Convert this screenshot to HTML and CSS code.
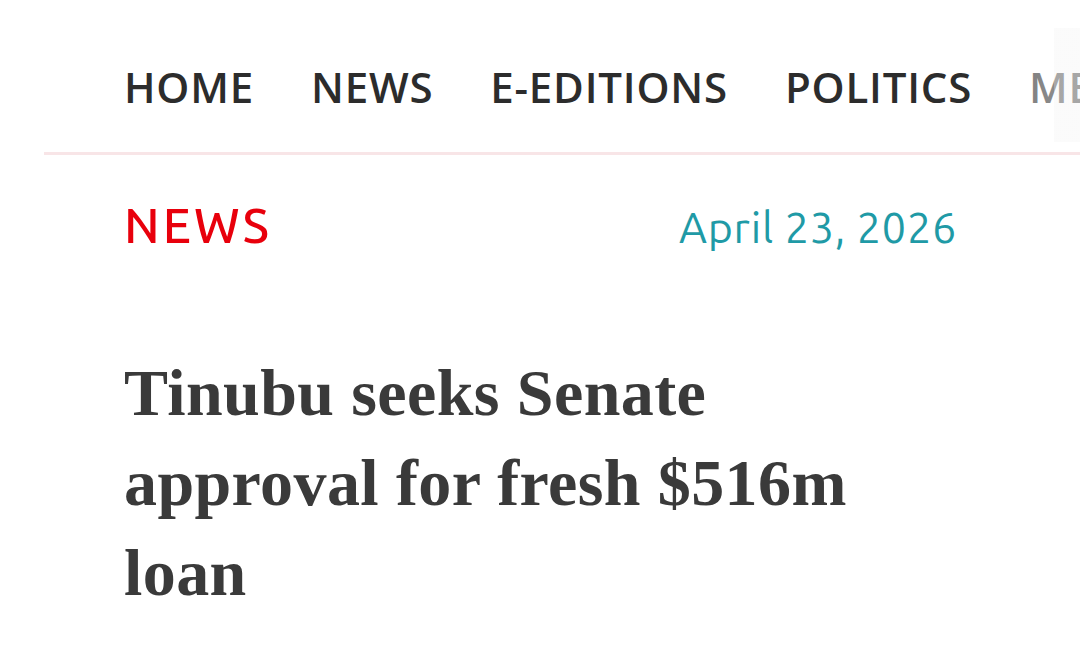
FILE: index.html
```html
<!DOCTYPE html>
<html>
<head>
<meta charset="utf-8">
<link rel="stylesheet" href="styles.css">
</head>
<body>
<header class="topbar">
  <nav class="nav">
    <a class="nav-item">HOME</a>
    <a class="nav-item">NEWS</a>
    <a class="nav-item">E-EDITIONS</a>
    <a class="nav-item">POLITICS</a>
    <a class="nav-item">METRO</a>
  </nav>
  <div class="fade"></div>
</header>
<main class="article">
  <div class="meta">
    <span class="category">NEWS</span>
    <span class="date">April 23, 2026</span>
  </div>
  <h1 class="title">Tinubu seeks Senate approval for fresh $516m loan</h1>
</main>
</body>
</html>
```

FILE: styles.css
```css
html, body {
  margin: 0;
  padding: 0;
  background: #fff;
}
body {
  width: 1080px;
  height: 662px;
  overflow: hidden;
}
.topbar {
  position: relative;
  margin-left: 44px;
  height: 152px;
  border-bottom: 3px solid #f8e5e7;
  overflow: hidden;
}
.nav {
  display: flex;
  gap: 57px;
  padding-left: 80px;
  padding-top: 62px;
  white-space: nowrap;
}
.nav-item {
  font-family: "Open Sans", sans-serif;
  font-weight: 600;
  font-size: 42px;
  letter-spacing: 0.8px;
  line-height: 50px;
  color: #2c2c2c;
  flex: none;
}
.fade {
  position: absolute;
  top: 28px;
  right: 0;
  width: 80px;
  height: 114px;
  background: linear-gradient(to right, rgba(255,255,255,0.35) 0, rgba(255,255,255,0.45) 68%, rgba(248,248,248,0.6) 68%, rgba(248,248,248,0.6) 100%);
}
.article {
  padding: 0 123px 0 124px;
}
.meta {
  display: flex;
  justify-content: space-between;
  align-items: baseline;
  padding-top: 42px;
  font-family: "Ubuntu", "Noto Sans", sans-serif;
}
.category {
  color: #e8000c;
  font-size: 49px;
  font-weight: 500;
  letter-spacing: 3px;
}
.date {
  color: #1f9aa6;
  font-size: 43px;
  letter-spacing: 0.8px;
}
.title {
  margin: 96px 0 0;
  font-family: "Liberation Serif", "Times New Roman", serif;
  font-weight: 700;
  font-size: 66px;
  letter-spacing: 0.4px;
  line-height: 90px;
  color: #3a3a3a;
}
```
